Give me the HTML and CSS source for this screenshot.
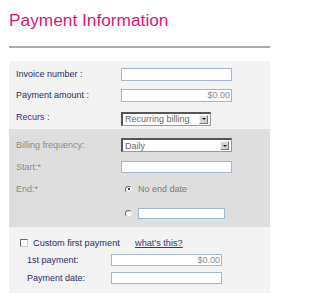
FILE: index.html
```html
<!DOCTYPE html>
<html>
<head>
<meta charset="utf-8">
<link rel="stylesheet" href="styles.css">
</head>
<body>
<h1 class="title">Payment Information</h1>
<div class="rule"></div>
<div class="panel">
  <div class="sec sec-top">
    <div class="row r21"><span class="lbl">Invoice number :</span><span class="field w111 h13"></span></div>
    <div class="row r21"><span class="lbl">Payment amount :</span><span class="field w111 h13 money">$0.00</span></div>
    <div class="row r23"><span class="lbl recurs">Recurs :</span><span class="select w90 shift"><span class="sel-text">Recurring billing</span><span class="arrow"></span></span></div>
  </div>
  <div class="sec sec-grey">
    <div class="row r22"><span class="lbl dim">Billing frequency:</span><span class="select w111"><span class="sel-text">Daily</span><span class="arrow"></span></span></div>
    <div class="row r22"><span class="lbl dim">Start:*</span><span class="field w111 h12"></span></div>
    <div class="row r22"><span class="lbl dim">End:*</span><span class="opt"><span class="radio on"></span><span class="opt-text">No end date</span></span></div>
    <div class="row r27"><span class="lbl"></span><span class="opt"><span class="radio"></span><span class="field w87 h11"></span></span></div>
  </div>
  <div class="sec sec-bottom">
    <div class="check-row"><span class="checkbox"></span><span class="check-text">Custom first payment</span><a class="link" href="#">what's this?</a></div>
    <div class="row2 r18"><span class="lbl">1st payment:</span><span class="field w111 h12 money">$0.00</span></div>
    <div class="row2 r18"><span class="lbl">Payment date:</span><span class="field w111 h12"></span></div>
  </div>
</div>
</body>
</html>
```
FILE: styles.css
```css
html, body {
  margin: 0;
  padding: 0;
  background: #ffffff;
}
body {
  font-family: "Liberation Sans", Arial, sans-serif;
  font-size: 9px;
  color: #2b2b6b;
  width: 277px;
  height: 298px;
  overflow: hidden;
}
.title {
  margin: 10px 0 0 9px;
  font-size: 17.3px;
  line-height: 20px;
  font-weight: normal;
  color: #d6177a;
}
.rule {
  margin: 16px 0 0 9px;
  width: 261px;
  height: 0;
  border-top: 2px solid #ababab;
}
.panel {
  margin: 13px 0 0 9px;
  width: 261px;
}
.sec-top {
  background: #f3f3f3;
  padding: 3px 0 0 7px;
}
.sec-grey {
  background: #dedede;
  padding: 5px 0 0 7px;
}
.sec-bottom {
  background: #f3f3f3;
  padding: 8px 0 6px 0;
}
.row {
  display: grid;
  grid-template-columns: 105px auto;
  align-items: center;
}
.row2 {
  display: grid;
  grid-template-columns: 84px auto;
  align-items: center;
  padding-left: 18px;
}
.r21 { height: 21px; }
.r22 { height: 22px; }
.r23 { height: 23px; }
.r27 { height: 27px; }
.r18 { height: 18px; }
.lbl {
  line-height: 11px;
  white-space: nowrap;
}
.recurs { color: #3a2a8c; }
.dim { color: #8a8a8a; }
.field {
  display: block;
  box-sizing: border-box;
  background: #ffffff;
  border: 1px solid #a3b6cf;
  color: #8c8c8c;
  font-size: 9px;
  line-height: 10px;
  text-align: right;
  padding-right: 1px;
}
.w111 { width: 111px; }
.w90 { width: 90px; }
.w87 { width: 87px; }
.h13 { height: 13px; }
.h12 { height: 12px; }
.h11 { height: 11px; }
.money { line-height: 11px; }
.select {
  display: flex;
  align-items: center;
  justify-content: space-between;
  box-sizing: border-box;
  height: 14px;
  background: #ffffff;
  border: 1px solid #9a9a9a;
  border-top: 2px solid #555555;
  border-left: 2px solid #555555;
  padding: 0 2px 0 2px;
  color: #6a6a6a;
  font-size: 9px;
}
.shift { margin-top: 2px; }
.sel-text { line-height: 10px; }
.arrow {
  position: relative;
  display: block;
  box-sizing: border-box;
  width: 9px;
  height: 9px;
  background: #d4d4d4;
  border: 1px solid #f4f4f4;
  border-right-color: #7a7a7a;
  border-bottom-color: #7a7a7a;
}
.arrow::after {
  content: "";
  position: absolute;
  left: 1.5px;
  top: 2.5px;
  width: 0;
  height: 0;
  border-left: 2.5px solid transparent;
  border-right: 2.5px solid transparent;
  border-top: 2.5px solid #111111;
}
.opt {
  display: flex;
  align-items: center;
  padding-left: 4px;
}
.radio {
  position: relative;
  display: block;
  box-sizing: border-box;
  width: 7px;
  height: 7px;
  border-radius: 50%;
  background: #ffffff;
  border: 1px solid #e8e8e8;
  border-top-color: #6a6a6a;
  border-left-color: #6a6a6a;
  margin-right: 6px;
}
.radio.on::after {
  content: "";
  position: absolute;
  left: 1.5px;
  top: 1.5px;
  width: 2px;
  height: 2px;
  border-radius: 50%;
  background: #111111;
}
.opt-text {
  color: #7a7a7a;
  font-size: 9px;
  line-height: 11px;
}
.check-row {
  display: flex;
  align-items: center;
  height: 16px;
  padding-left: 11px;
}
.checkbox {
  display: block;
  box-sizing: border-box;
  width: 8px;
  height: 8px;
  background: #ffffff;
  border: 1px solid #6a6a6a;
  border-right-color: #cfcfcf;
  border-bottom-color: #cfcfcf;
  margin-right: 5px;
}
.check-text {
  color: #2b2b6b;
  font-size: 9.2px;
  line-height: 11px;
  width: 102px;
}
.link {
  color: #2a3a78;
  font-size: 9.2px;
  line-height: 11px;
  text-decoration: underline;
}
```
